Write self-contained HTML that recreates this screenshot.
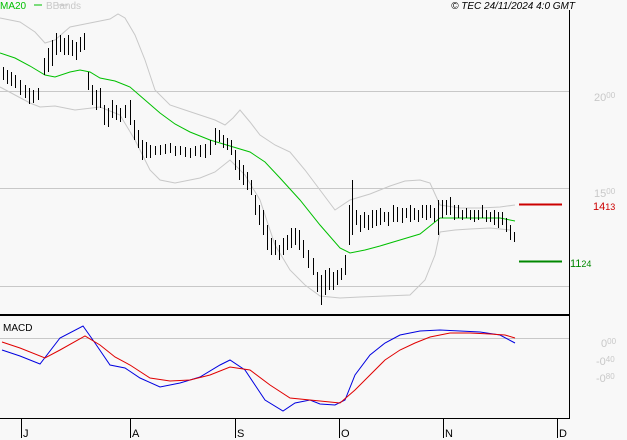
<!DOCTYPE html><html><head><style>html,body{margin:0;padding:0;background:#f8f8f8}svg{display:block}</style></head><body>
<svg width="627" height="440" viewBox="0 0 627 440" xmlns="http://www.w3.org/2000/svg" font-family="Liberation Sans, sans-serif">
<rect width="627" height="440" fill="#f8f8f8"/>
<g stroke="#c8c8c8" stroke-width="1" shape-rendering="crispEdges">
<line x1="0" y1="91.5" x2="569" y2="91.5"/><line x1="0" y1="188.5" x2="569" y2="188.5"/><line x1="0" y1="286.5" x2="569" y2="286.5"/><line x1="0" y1="338.5" x2="569" y2="338.5"/>
</g>
<g fill="none" stroke="#c8c8c8" stroke-width="1">
<polyline points="0,18 20,22 35,32 45,43 55,40 70,27 90,23 110,19 118,14 125,18 135,35 145,60 155,90 170,105 185,110 200,115 215,120 225,125 233,118 240,110 250,122 260,135 275,145 290,152 305,170 320,190 335,210 350,200 370,194 390,186 405,181 420,180 430,183 440,205 460,208 480,208 500,207 515,205"/>
<polyline points="0,87 15,95 30,103 40,107 55,106 75,110 100,107 120,115 135,140 150,170 160,180 175,183 200,178 215,172 230,160 245,175 260,200 275,245 290,270 305,285 320,296 340,298 360,297 385,296 410,295 425,280 435,255 440,232 455,230 470,229 490,228 510,230"/>
</g>
<polyline fill="none" stroke="#00c000" stroke-width="1" points="0,53 15,58 30,66 45,75 55,77 70,72 80,70 90,72 100,78 115,81 130,87 145,100 160,113 175,124 190,132 210,140 230,146 250,152 265,162 280,178 300,200 320,225 340,248 350,253 365,250 380,246 400,240 420,234 440,218 460,218 480,218 500,218 515,221"/>
<path transform="translate(0.5,0)" shape-rendering="crispEdges" stroke="#000" stroke-width="1" fill="none" d="M3 67V80M7 70V84M11 72V86M15 75V88M20 80V95M25 85V98M29 88V104M33 90V103M38 88V100M44 58V75M48 48V72M52 40V66M56 33V55M60 35V52M64 38V55M68 35V55M72 40V56M76 42V60M80 37V52M84 33V50M88 72V90M92 85V105M96 90V110M100 88V108M104 105V125M108 108V127M112 100V118M116 105V120M120 108V122M125 105V118M130 100V125M134 120V140M138 130V148M142 140V160M146 142V158M150 145V158M155 146V155M160 145V155M165 144V154M170 143V153M175 146V156M180 146V155M185 147V157M190 148V158M195 146V156M200 145V157M205 144V158M210 140V155M215 128V145M219 130V142M223 135V148M227 138V150M231 140V155M235 150V170M239 160V180M243 165V185M247 172V190M251 180V195M255 195V215M259 205V225M263 210V235M267 225V250M271 238V255M275 240V255M279 245V260M283 238V255M287 235V250M291 228V248M295 228V245M299 230V250M303 240V258M308 250V268M313 258V275M317 272V292M321 275V305M325 270V295M329 268V290M333 272V290M337 270V285M341 268V280M345 255V275M349 205V245M352 180V235M356 210V225M360 215V232M364 212V228M368 215V230M372 210V228M376 210V226M380 208V225M384 212V222M388 212V226M393 205V222M397 207V222M402 208V223M406 208V218M410 205V222M414 208V220M418 210V222M422 205V218M426 205V220M430 205V218M434 208V222M438 200V235M442 200V218M446 200V215M450 197V215M454 205V220M458 205V218M462 210V220M466 208V218M470 210V220M474 210V222M478 210V220M482 205V218M486 210V222M490 212V222M494 210V225M498 212V228M502 212V225M506 218V232M510 225V240M514 232V242"/>
<line x1="0" y1="315" x2="569" y2="315" stroke="#000" stroke-width="2" shape-rendering="crispEdges"/>
<g shape-rendering="crispEdges" stroke="#000">
<line x1="569.5" y1="10" x2="569.5" y2="419"/>
<line x1="0" y1="418.5" x2="570" y2="418.5"/>
<path d="M21.5 419V438M130.5 419V438M235.5 419V438M339.5 419V438M443.5 419V438M557.5 419V438"/></g>
<g font-size="11" fill="#000"><text x="23" y="437">J</text><text x="132" y="437">A</text><text x="237" y="437">S</text><text x="341" y="437">O</text><text x="445" y="437">N</text><text x="559" y="437">D</text></g>
<polyline fill="none" stroke="#0000e0" stroke-width="1" points="2,350 20,356 40,364 60,338 83,326 95,343 110,365 125,368 140,378 160,387 180,383 200,377 220,365 230,360 245,370 265,400 283,411 295,403 310,400 320,404 335,405 345,400 355,375 370,355 385,343 400,335 420,331 440,330 460,331 480,332 500,335 515,343"/>
<polyline fill="none" stroke="#e00000" stroke-width="1" points="2,342 20,348 45,358 60,350 85,336 100,345 115,357 130,365 150,378 170,381 190,380 210,375 230,367 250,370 270,385 290,398 320,401 340,403 355,390 370,375 385,360 400,350 415,343 430,337 450,333 470,333 490,334 505,335 515,338"/>
<text x="3" y="331" font-size="10" fill="#000">MACD</text>
<text x="0" y="9" font-size="10" fill="#00c000">MA20</text><line x1="34" y1="5" x2="42" y2="5" stroke="#00c000"/>
<text x="34" y="9" font-size="10" fill="#c8c8c8" dx="12">BBands</text><line x1="58" y1="5" x2="68" y2="5" stroke="#c8c8c8"/>
<text x="575" y="9" font-size="10" font-style="italic" fill="#000" text-anchor="end">© TEC 24/11/2024 4:0 GMT</text>
<g font-size="11" fill="#c8c8c8">
<text x="594" y="101">20<tspan font-size="8" dy="-3">00</tspan></text>
<text x="594" y="197">15<tspan font-size="8" dy="-3">00</tspan></text>
<text x="601" y="347">0<tspan font-size="8" dy="-3">00</tspan></text>
<text x="596" y="365">-0<tspan font-size="8" dy="-3">40</tspan></text>
<text x="596" y="382">-0<tspan font-size="8" dy="-3">80</tspan></text>
</g>
<line x1="519" y1="204.5" x2="562" y2="204.5" stroke="#cc0000" stroke-width="2"/>
<line x1="519" y1="261.5" x2="562" y2="261.5" stroke="#008800" stroke-width="2"/>
<text x="593" y="210" font-size="11" fill="#cc0000">14<tspan font-size="9">13</tspan></text>
<text x="570" y="267" font-size="11" fill="#008800">11<tspan font-size="9">24</tspan></text>
</svg>
</body></html>
